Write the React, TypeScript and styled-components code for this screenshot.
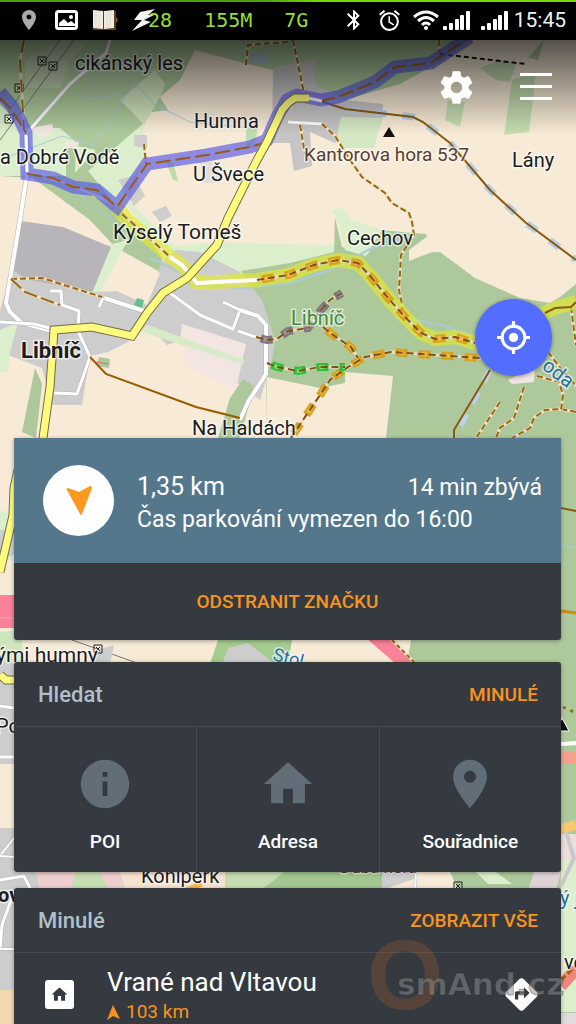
import React from 'react';
import styled, { createGlobalStyle } from 'styled-components';
import { MdAlarm, MdBluetooth, MdDirections, MdHome, MdInfo, MdPlace } from 'react-icons/md';

const GlobalStyle = createGlobalStyle`
  * { box-sizing: border-box; }
  body { margin: 0; background: #f7ead6; font-family: Roboto, sans-serif; }
  button { border: 0; padding: 0; background: none; font: inherit; color: inherit; cursor: pointer; }
  svg { display: block; flex: none; }
`;

const Screen = styled.div`
  position: relative;
  height: 100vh;
  overflow: hidden;
  display: flex;
  flex-direction: column;
`;

const MapSvg = styled.svg`
  position: absolute;
  inset: 0;
  width: 100%;
  height: 100%;
  text { font-family: Roboto, sans-serif; paint-order: stroke; stroke-linejoin: round; }
`;

const Overlay = styled.div`
  position: relative;
  display: flex;
  flex-direction: column;
  flex: 1;
`;

const StatusBar = styled.header`
  height: 40px;
  flex: none;
  display: flex;
  align-items: center;
  justify-content: space-between;
  padding: 0 10px 0 17px;
  background: linear-gradient(90deg, #48a010 45%, #72d800 55%) top / 100% 2px no-repeat #000;
  color: #fff;
`;

const StatusGroup = styled.div<{ $gap: number }>`
  display: flex;
  align-items: center;
  gap: ${(p) => p.$gap}px;
`;

const Monitor = styled.span<{ $shift?: boolean }>`
  font: 20px/24px 'DejaVu Sans Mono', monospace;
  color: #98df2e;
  margin-left: ${(p) => (p.$shift ? '-24px' : '18px')};
`;

const Clock = styled.time`
  font-size: 21px;
  line-height: 24px;
  color: #f2f2f2;
  margin-left: -5px;
`;

const Toolbar = styled.nav`
  display: flex;
  justify-content: flex-end;
  align-items: center;
  gap: 44px;
  height: 94px;
  flex: none;
  padding: 0 24px;
  background: linear-gradient(rgba(0, 0, 0, 0.66), rgba(0, 0, 0, 0));
  color: #fff;
`;

const IconButton = styled.button`
  display: flex;
`;

const LocateButton = styled.button`
  width: 77px;
  height: 77px;
  flex: none;
  align-self: flex-end;
  margin: 165px 24px 62px 0;
  border-radius: 50%;
  background: #536dfe;
  box-shadow: 0 1px 4px rgba(0, 0, 0, 0.4);
  display: flex;
  align-items: center;
  justify-content: center;
`;

const Dashboard = styled.main`
  display: flex;
  flex-direction: column;
  flex: 1;
  padding: 0 15px 0 14px;
`;

const Card = styled.section<{ $gap?: number; $square?: boolean }>`
  flex: none;
  margin-bottom: ${(p) => p.$gap ?? 0}px;
  background: #343a40;
  border-radius: ${(p) => (p.$square ? '0 0 3px 3px' : '3px')};
  box-shadow: 0 1px 4px rgba(0, 0, 0, 0.35);
  overflow: hidden;
`;

const ParkingInfo = styled.div`
  display: flex;
  align-items: center;
  gap: 23px;
  height: 125px;
  padding: 0 19px 0 29px;
  background: #54778c;
  color: #fff;
`;

const Compass = styled.div`
  width: 71px;
  height: 71px;
  flex: none;
  border-radius: 50%;
  background: #fff;
  display: flex;
  align-items: center;
  justify-content: center;
`;

const ParkingText = styled.div`
  flex: 1;
  padding-top: 6px;
`;

const ParkingRow = styled.div`
  display: flex;
  justify-content: space-between;
  align-items: baseline;
  font-size: 23px;
  line-height: 32px;
`;

const Distance = styled.strong`
  font-size: 25px;
  font-weight: 400;
`;

const RemoveButton = styled.button`
  display: block;
  width: 100%;
  height: 77px;
  color: #f7931e;
  font-size: 19px;
  font-weight: 500;
`;

const CardHeader = styled.header`
  display: flex;
  align-items: center;
  justify-content: space-between;
  height: 65px;
  padding: 0 23px 0 24px;
  border-bottom: 1px solid #444c53;
`;

const CardTitle = styled.h2`
  margin: 0;
  font-size: 22px;
  font-weight: 500;
  color: #b0c0ca;
`;

const TextButton = styled.button`
  color: #f7931e;
  font-size: 19px;
  font-weight: 500;
`;

const Tiles = styled.div`
  display: grid;
  grid-template-columns: repeat(3, 1fr);
  height: 145px;
`;

const Tile = styled.button`
  display: flex;
  flex-direction: column;
  align-items: center;
  padding-top: 28px;
  gap: 16px;
  font-size: 19px;
  line-height: 26px;
  font-weight: 500;
  color: #fff;
  & + & { border-left: 1px solid #444c53; }
  svg { color: #616e77; }
`;

const HistoryRow = styled.div`
  display: flex;
  align-items: center;
  height: 82px;
  padding: 0 20px 0 31px;
  color: #fff;
`;

const HomeBadge = styled.div`
  width: 29px;
  height: 29px;
  border-radius: 3px;
  background: #fff;
  color: #343a40;
  display: flex;
  align-items: center;
  justify-content: center;
`;

const PlaceText = styled.div`
  flex: 1;
  margin-left: 33px;
  padding-top: 4px;
`;

const PlaceName = styled.div`
  font-size: 26px;
  line-height: 32px;
`;

const PlaceDistance = styled.div`
  display: flex;
  align-items: center;
  gap: 6px;
  font-size: 19px;
  line-height: 28px;
  color: #f7931e;
`;

const Watermark = styled.svg`
  position: absolute;
  right: 0;
  bottom: 0;
  pointer-events: none;
`;

const FOREST = '#adc99c';
const MEADOW = '#dcefcc';
const TOWN = '#cdcdcd';
const PALE = '#f3e6e2';
const TRACK = '#996611';

type Pts = { d: string };

const RoadWhite = ({ d, w = 4 }: Pts & { w?: number }) => (
  <g fill="none" strokeLinejoin="round">
    <polyline points={d} stroke="#b5b5b5" strokeWidth={w + 1} />
    <polyline points={d} stroke="#fff" strokeWidth={w} />
  </g>
);

const RoadYellow = ({ d }: Pts) => (
  <g fill="none" strokeLinejoin="miter">
    <polyline points={d} stroke="#6f6f45" strokeWidth={9} />
    <polyline points={d} stroke="#fdfa7e" strokeWidth={7} />
  </g>
);

const Path = ({ d, dash = '6 3' }: Pts & { dash?: string }) => (
  <g fill="none">
    <polyline points={d} stroke="#efe2c4" strokeWidth={3} />
    <polyline points={d} stroke={TRACK} strokeWidth={2} strokeDasharray={dash} />
  </g>
);

const Chain = ({ d, color, inner }: Pts & { color: string; inner: string }) => (
  <g fill="none">
    <polyline points={d} stroke="#e9dcc0" strokeWidth={3} />
    <polyline points={d} stroke={color} strokeWidth={8} strokeDasharray="12 11" strokeDashoffset={-5} />
    <polyline points={d} stroke={inner} strokeWidth={4} strokeDasharray="5 18" strokeDashoffset={-8} />
    <polyline points={d} stroke="#7d5313" strokeWidth={2} strokeDasharray="7 4" />
  </g>
);

const Stream = ({ d, w = 1 }: Pts & { w?: number }) => (
  <polyline points={d} fill="none" stroke="#a9cbd8" strokeWidth={w} />
);

const Pylon = ({ x, y }: { x: number; y: number }) => (
  <path
    d={`M${x - 4} ${y - 4}h8v8h-8zM${x - 2} ${y - 2}l4 4m0 -4l-4 4`}
    fill="none"
    stroke="#222"
    strokeWidth={1}
  />
);

type LabelProps = { x: number; y: number; size?: number; color?: string; bold?: boolean; turn?: number; halo?: string; children: string };

const Label = ({ x, y, size = 20, color = '#1b1b20', bold, turn = 0, halo = 'rgba(255,255,255,.6)', children }: LabelProps) => (
  <text x={x} y={y} fontSize={size} fill={color} stroke={halo} strokeWidth={3} fontWeight={bold ? 700 : 400} transform={`rotate(${turn} ${x} ${y})`}>
    {children}
  </text>
);

const route = '0,92 12,106 20,120 26,133 27,174 53,178 73,187 97,190 117,207 147,164 207,155 250,147 267,140 277,117 287,100 297,95 321,100 338,97 375,82 395,67 431,63 470,37';
const trail = '117,207 127,220 157,245 170,257 182,265 197,283 257,280 288,275 314,265 338,260 358,263 371,277 388,298 405,317 421,333 435,339 455,337 475,343 500,346 545,313 555,308 576,302';

const MapView = () => (
  <MapSvg viewBox="0 0 576 1024" preserveAspectRatio="xMidYMin slice" aria-label="Mapa">
    <rect width="576" height="1024" fill="#f7ead6" />

    {/* woods and meadows in the north */}
    <polygon points="0,40 250,40 470,40 440,62 400,84 345,100 300,100 273,70 240,62 195,50 180,80 160,97 168,110 144,113 144,160 130,190 110,200 60,180 0,176" fill={FOREST} />
    <polygon points="62,40 90,40 70,62 61,88 24,88 26,60" fill="#bfcfae" />
    <polygon points="0,105 25,128 60,128 76,142 78,146 96,150 72,176 0,176" fill={MEADOW} />
    <polygon points="120,100 155,70 165,84 160,97 144,125 132,112" fill="#cfe2bd" />
    <polygon points="88,171 144,123 144,160 117,206" fill={MEADOW} />
    <polygon points="30,128 52,124 54,130 42,139" fill={PALE} />
    <polygon points="66,142 79,142 76,160 60,160" fill={PALE} />
    <polygon points="66,148 76,148 74,195 66,190" fill={FOREST} />
    <polygon points="134,135 147,135 147,148 134,146" fill={TOWN} />
    <polygon points="246,128 258,128 254,148 246,148" fill="#bfdcae" />
    <polygon points="166,162 173,162 178,181 173,180" fill="#bfd9a8" />
    <polygon points="250,54 262,52 270,58 266,64 250,63" fill="#a9bfc6" />
    <polygon points="480,68 500,60 516,64 510,82 496,80" fill="#c5dab0" />
    <polygon points="448,100 465,102 460,127 445,120" fill="#c5ddb0" />
    <polygon points="512,80 536,72 529,132 504,135" fill="#c5ddb0" />
    <polygon points="528,58 544,40 538,60" fill={FOREST} />

    {/* built-up land by the northern junction */}
    <polygon points="273,68 315,59 315,84 345,100 383,104 383,118 360,118 335,143 310,132 312,166 294,171 290,143 272,143" fill="#c6c4c4" />
    <polygon points="341,117 383,118 374,148 342,148 336,140" fill="#d3e8c3" />
    <polygon points="200,162 220,162 220,183 204,183" fill="#e1ded9" />
    <polygon points="332,210 344,208 352,222 338,222" fill={MEADOW} />

    {/* central forest belt */}
    <polygon points="30,176 66,184 117,207 164,247 160,272 115,247 90,220" fill={FOREST} />
    <polygon points="117,190 133,205 175,246 215,242 260,244 260,270 205,285 165,262" fill={MEADOW} />
    <polygon points="108,245 128,240 98,296 90,290" fill={MEADOW} />
    <polygon points="230,243 336,245 338,258 290,272 244,272" fill={MEADOW} />
    <polygon points="118,180 134,176 145,196 134,206" fill="#cfd0c4" />
    <polygon points="152,212 166,206 172,216 160,222" fill={TOWN} />
    <polygon points="241,271 290,263 334,252 335,218 342,247 368,254 380,230 426,234 428,238 410,253 440,252 475,278 520,298 550,303 560,297 576,284 576,1024 200,1024 230,438 267,438 266,340 262,312" fill={FOREST} />
    <polygon points="409,250 428,236 444,248 432,252 409,261" fill="#f7ead6" />
    <polygon points="338,222 350,220 382,230 366,256 345,250" fill={MEADOW} />
    <polygon points="267,377 320,388 345,383 345,372 393,376 386,438 267,438" fill="#f7ead6" />
    <polygon points="512,384 508,380 535,366 534,382" fill={PALE} />

    {/* Libníč */}
    <polygon points="21,221 63,227 111,247 92,293 12,281" fill="#b8b5ba" />
    <polygon points="0,310 12,270 30,280 92,292 150,290 162,262 176,250 200,252 240,272 262,300 275,340 272,360 266,380 260,400 230,378 212,350 182,324 180,341 167,345 147,325 132,340 108,352 90,356 82,405 52,405 42,368 0,352" fill={TOWN} />
    <polygon points="128,258 160,273 147,305 104,285" fill="#f7ead6" />
    <polygon points="0,330 18,322 10,352 8,372 0,372" fill={MEADOW} />
    <polygon points="182,324 246,344 236,390 185,365" fill={PALE} />
    <polygon points="148,325 245,360 243,365 142,332" fill="#d8eac8" />
    <polygon points="35,368 42,384 36,438 22,432" fill={FOREST} />
    <polygon points="243,379 254,386 240,438 218,438 230,398" fill={FOREST} />
    <polygon points="137,298 144,300 142,308 134,305" fill="#68bd8c" />
    <polygon points="99,357 110,359 109,368 97,366" fill={FOREST} />
    <path d="M96 362l12 2" stroke="#d96a74" fill="none" />

    {/* streams */}
    <Stream d="97,40 100,65 85,100 118,95 135,83 155,105 190,122 250,128" />
    <Stream d="135,83 110,120 92,145 62,136 0,160" />
    <Stream d="75,190 100,212 115,222" />
    <Stream d="150,258 180,272 190,285 244,288 288,284 330,270 350,260 370,249 400,240" w={2} />
    <Stream d="400,317 445,326 478,338" w={2} />

    {/* power lines */}
    <g fill="none" stroke="#777" strokeWidth="1">
      <path d="M60 40L8 112M74 40L0 140M72 640L140 664" />
    </g>
    <Pylon x={42} y={61} />
    <Pylon x={53} y={66} />
    <Pylon x={19} y={88} />
    <Pylon x={9} y={119} />

    {/* lanes */}
    <RoadWhite d="110,40 106,53 70,84 27,133" w={3} />
    <RoadWhite d="26,133 27,174 20,220 6,303 10,312 22,323 52,331" />
    <RoadWhite d="0,322 34,324 54,329" w={3} />
    <RoadWhite d="104,298 144,311" />
    <RoadWhite d="103,298 99,307" w={3} />
    <RoadWhite d="170,293 200,315 233,329 240,310 223,302" w={3} />
    <RoadWhite d="240,310 258,316 266,325 266,374 248,402 240,420" />
    <RoadWhite d="50,291 61,291 62,305 79,311 78,331 90,357 77,394 54,393" w={3} />
    <RoadWhite d="288,122 322,124" w={3} />

    {/* tracks */}
    <polyline points="320,101 345,109 413,117 423,122 450,143 490,190 525,222 576,260" fill="none" stroke="#b5d0e5" strokeWidth="7" strokeDasharray="12 16" />
    <polyline points="320,101 345,109 413,117 423,122 450,143 490,190 525,222 576,260" fill="none" stroke="#8a5a10" strokeWidth="2" />
    <polyline points="490,370 454,438" fill="none" stroke="#b9d3e6" strokeWidth="6" strokeDasharray="13 12" />
    <polyline points="490,370 454,430 454,438" fill="none" stroke="#8a5a10" strokeWidth="2" />
    <polyline points="90,357 106,374 196,407 240,418" fill="none" stroke="#965c00" strokeWidth="2" />
    <Path d="322,124 335,136 350,160 362,177 385,193 392,203 409,213 412,222 414,235 401,255 399,290 403,310" />
    <Path d="293,40 305,98" />
    <Path d="300,125 305,154" />
    <Path d="11,279 42,278 102,297" />
    <Path d="11,279 25,292 60,305" dash="14 4" />
    <Path d="24,40 20,60 24,130" dash="13 7" />
    <Path d="144,144 146,164" />
    <Path d="246,65 248,45 288,42" />
    <Path d="439,40 440,56" />
    <Path d="500,402 476,438" />
    <Path d="524,387 514,418 500,428 496,438" />
    <Path d="576,412 561,409 545,410 534,418 530,428 512,438" />
    <Path d="537,376 559,382 563,395 561,410" />
    <Path d="571,307 576,345" />
    <Path d="548,352 562,370 576,386" />
    <path d="M440 54L526 64" stroke="#111" strokeWidth="2" strokeDasharray="5 3" />

    {/* highlighted routes */}
    <polyline points={trail} fill="none" stroke="#e3ea2c" strokeOpacity=".65" strokeWidth="14" strokeLinejoin="round" />
    <polyline points="170,257 182,265 197,283 257,280" fill="none" stroke="#fff" strokeWidth="4" />
    <Path d="122,214 157,245 170,257" dash="7 4" />
    <Chain d="257,280 288,275 314,265 338,260 358,263 371,277 388,298 405,317 421,333 435,339 455,337 475,343" color="#dba01c" inner="#f0bd5c" />
    <polyline points="545,313 555,308 571,307 576,302" fill="none" stroke="#8a5a10" strokeWidth="2" />
    <Chain d="291,438 305,417 318,398 330,380 348,367 365,357 391,352 435,355 481,358" color="#dba01c" inner="#f0bd5c" />
    <Chain d="323,327 333,335 351,347 358,358" color="#dba01c" inner="#f0bd5c" />
    <RoadWhite d="238,331 256,337" w={3} />
    <Chain d="256,337 267,340 277,339 288,331 308,328 321,310 330,300 342,293" color="#7f7680" inner="#a59a96" />
    <Chain d="267,363 277,367 298,371 320,367 345,367" color="#2fbd3c" inner="#7fdc6c" />
    <polyline points={route} fill="none" stroke="#5656e6" strokeOpacity=".65" strokeWidth="13" />
    <polyline points="27,174 53,178 73,187 97,190 117,207 147,164 207,155 250,147 267,142" fill="none" stroke="#9a5c14" strokeWidth="2" strokeDasharray="15 5" />
    <polyline points="0,98 12,110 26,133" fill="none" stroke="#9a5c14" strokeWidth="2" strokeDasharray="15 5" />
    <polyline points="320,101 338,97 375,82 395,67 431,63 470,37" fill="none" stroke="#9a5c14" strokeWidth="2" strokeDasharray="15 5" />
    <polyline points="26,135 27,172" fill="none" stroke="#fff" strokeWidth="3" />
    <polyline points="308,98 322,101" fill="none" stroke="#eee" strokeWidth="3" />
    <RoadYellow d="36,460 43,438 50,387 54,330 92,327 132,336 147,313 163,293 187,278 217,245 228,218 257,160 267,142 282,110 288,103 295,98 309,98" />

    {/* strips visible between and beside the cards */}
    <polygon points="0,510 14,515 14,560 0,560" fill={MEADOW} />
    <polygon points="0,530 14,528 14,555 0,560" fill={TOWN} />
    <RoadYellow d="18,470 14,488 13,515 0,572" />
    <rect y="595" width="20" height="33" fill="#fb8198" />
    <path d="M0 618h20" stroke="#f3a8b2" />
    <polygon points="0,632 20,630 25,662 0,662" fill="#cfe6bd" />
    <polygon points="0,662 14,662 14,770 0,770" fill={TOWN} />
    <polygon points="96,650 114,645 110,664 92,664" fill={TOWN} />
    <polygon points="218,640 300,640 310,664 210,664" fill="#a5cc90" />
    <polygon points="228,648 248,643 275,664 222,664" fill={TOWN} />
    <polygon points="292,640 411,640 407,664 288,664" fill="#f7ead6" />
    <polygon points="366,638 388,638 416,664 396,664" fill="#fb8198" />
    <Path d="392,640 416,664" dash="4 3" />
    <RoadYellow d="0,675 6,680 20,680" />
    <RoadWhite d="0,706 14,708" w={3} />
    <RoadWhite d="0,757 14,757" w={3} />
    <rect y="764" width="14" height="64" fill="#f7ead6" />
    <rect y="828" width="14" height="162" fill={TOWN} />
    <RoadWhite d="0,856 14,838" w={2} />
    <RoadWhite d="0,856 14,857" w={2} />
    <polygon points="0,872 70,872 76,890 0,890" fill={TOWN} />
    <polygon points="36,872 120,872 126,890 40,890" fill="#efcfcd" />
    <polygon points="76,872 100,872 108,890 70,890" fill="#c5ddb0" />
    <polygon points="120,872 225,872 225,890 126,890" fill="#f7e2cf" />
    <polygon points="225,872 290,872 260,890 225,890" fill="#c5ddb0" />
    <polygon points="284,872 382,872 382,890 262,890" fill="#a2c78f" />
    <polygon points="382,872 414,872 414,880 382,890" fill={TOWN} />
    <polygon points="382,890 414,879 414,890" fill="#f7ead6" />
    <polygon points="414,872 450,872 458,890 414,890" fill="#f7ead6" />
    <polygon points="476,872 496,872 512,884 488,884" fill={MEADOW} />
    <polygon points="534,872 561,872 556,890 528,890" fill="#e0d3d6" />
    <RoadWhite d="416,872 415,890" w={2} />
    <RoadWhite d="0,880 24,876 31,890" w={3} />
    <RoadWhite d="14,892 2,925 0,950" w={3} />
    <RoadWhite d="0,949 14,949" w={2} />
    <rect y="990" width="14" height="34" fill="#f4d9b0" />
    <polyline points="186,890 202,884" stroke="#f6b83f" strokeWidth="5" fill="none" />
    <path d="M561 508L576 511" stroke="#8a5a10" strokeWidth="2" />
    <path d="M561 544L576 548" stroke="#a9cbd8" />
    <path d="M561 611L576 613" stroke="#c89010" strokeWidth="3" />
    <path d="M563 707L576 713" stroke={TRACK} strokeWidth="3" strokeDasharray="3 5" />
    <path d="M556 731l6-13 7 13z" fill="#111" stroke="#fff" />
    <path d="M561 744L576 743" stroke="#fff" strokeWidth="4" />
    <path d="M561 757L576 758" stroke="#f5a08a" strokeWidth="11" />
    <rect x="561" y="834" width="15" height="26" fill="#eadfdb" />
    <rect x="561" y="860" width="15" height="152" fill={MEADOW} />
    <path d="M561 829L576 825" stroke="#f8c873" strokeWidth="10" />
    <path d="M566 832L574 858L561 886" stroke="#cfc6cb" strokeWidth="4" fill="none" />
    <path d="M561 986L576 969" stroke="#f2867a" strokeWidth="12" />
    <path d="M561 980L576 966" stroke={TRACK} strokeWidth="3" strokeDasharray="6 3" />
    <rect x="561" y="1013" width="15" height="11" fill="#e1dcda" />
    <Pylon x={98} y={649} />
    <Pylon x={458} y={886} />

    <Label x={75} y={70}>cikánský les</Label>
    <Label x={194} y={128}>Humna</Label>
    <Label x={0} y={164}>a Dobré Vodě</Label>
    <Label x={193} y={181}>U Švece</Label>
    <Label x={304} y={161} color="#5d3d2c" size={19}>Kantorova hora 537</Label>
    <path d="M389 127l6 10h-12z" fill="#111" />
    <Label x={512} y={167}>Lány</Label>
    <Label x={113} y={239} size={21}>Kyselý Tomeš</Label>
    <Label x={347} y={245}>Cechov</Label>
    <Label x={291} y={325} color="#3c8a3f">Libníč</Label>
    <Label x={21} y={358} size={22} bold>Libníč</Label>
    <Label x={192} y={435}>Na Haldách</Label>
    <Label x={541} y={368} color="#2272a6" turn={38}>oda</Label>
    <Label x={-4} y={662} size={21}>ými humny</Label>
    <Label x={272} y={660} color="#2272a6" size={18} turn={14}>Stol</Label>
    <Label x={-4} y={733}>Po</Label>
    <Label x={141} y={883}>Koniperk</Label>
    <Label x={340} y={873} color="#5d3d2c" size={17}>Dubá hora</Label>
    <Label x={-2} y={902} bold>ov</Label>
    <Label x={560} y={905} color="#2272a6">ý j</Label>
    <Label x={564} y={969}>ve</Label>
  </MapSvg>
);

const Signal = () => (
  <svg width="27" height="19" viewBox="0 0 27 19" fill="#fff">
    <rect x="0" y="15" width="4" height="4" rx="1" />
    <rect x="6" y="12" width="4" height="7" rx="1" />
    <rect x="12" y="8" width="4" height="11" rx="1" />
    <rect x="17" y="4" width="4" height="15" rx="1" />
    <rect x="23" y="0" width="4" height="19" rx="1" />
  </svg>
);

const ImageIcon = () => (
  <svg width="23" height="20" viewBox="0 0 23 20">
    <rect x="1.5" y="1.5" width="20" height="17" rx="2" fill="none" stroke="#fff" strokeWidth="3" />
    <path d="M4 16v-3l5-4 4 4 3-2 4 3v2z" fill="#fff" />
    <circle cx="16" cy="7" r="2" fill="#fff" />
  </svg>
);

const BookIcon = () => (
  <svg width="26" height="22" viewBox="0 0 26 22">
    <path d="M1 2h23v19H1z" fill="#5c3b1c" />
    <path d="M1 1l10 1v18L1 19zM12 2l10-1v18l-10 1z" fill="#eeeae0" />
    <path d="M4 2v17M7 2v17M15 2v17M18 2v17" stroke="#dcd9ce" />
    <path d="M24 8l2 3-2 3z" fill="#8c5a24" />
  </svg>
);

const BoltIcon = () => (
  <svg width="26" height="24" viewBox="0 0 26 24" fill="#f3f3f3">
    <path d="M23 1L8 4 2 12h8L0 23l19-9-7-2 10-5h-6z" />
  </svg>
);

const WifiIcon = () => (
  <svg width="26" height="20" viewBox="0 0 26 20" fill="none" stroke="#fff" strokeWidth="3">
    <path d="M1 7Q13 -3 25 7M5 11Q13 4 21 11M9 15Q13 11 17 15" />
    <circle cx="13" cy="18" r="2" fill="#fff" stroke="none" />
  </svg>
);

const AlarmIcon = MdAlarm;

const GearIcon = () => (
  <svg width="39" height="39" viewBox="0 0 24 24" fill="#fff">
    <path d="M19.43 12.98c.04-.32.07-.64.07-.98s-.03-.66-.07-.98l2.11-1.65c.19-.15.24-.42.12-.64l-2-3.46c-.12-.22-.39-.3-.61-.22l-2.49 1c-.52-.4-1.08-.73-1.69-.98l-.38-2.65C14.46 2.18 14.25 2 14 2h-4c-.25 0-.46.18-.49.42l-.38 2.65c-.61.25-1.17.59-1.69.98l-2.49-1c-.23-.09-.49 0-.61.22l-2 3.46c-.13.22-.07.49.12.64l2.11 1.65c-.04.32-.07.65-.07.98s.03.66.07.98l-2.11 1.65c-.19.15-.24.42-.12.64l2 3.46c.12.22.39.3.61.22l2.49-1c.52.4 1.08.73 1.69.98l.38 2.65c.03.24.24.42.49.42h4c.25 0 .46-.18.49-.42l.38-2.65c.61-.25 1.17-.59 1.69-.98l2.49 1c.23.09.49 0 .61-.22l2-3.46c.12-.22.07-.49-.12-.64l-2.11-1.65zM12 15.5c-1.93 0-3.5-1.57-3.5-3.5s1.57-3.5 3.5-3.5 3.5 1.57 3.5 3.5-1.57 3.5-3.5 3.5z" />
  </svg>
);

const MenuIcon = () => (
  <svg width="32" height="28" viewBox="0 0 32 28" fill="#fff">
    <path d="M0 0h32v3H0zM0 12h32v3H0zM0 24h32v3H0z" />
  </svg>
);

const LocateIcon = () => (
  <svg width="33" height="33" viewBox="0 0 32 32" fill="none" stroke="#fff" strokeWidth="3">
    <circle cx="16" cy="16" r="11" />
    <path d="M16 0v5M16 27v5M0 16h5M27 16h5" />
    <circle cx="16" cy="16" r="4.5" fill="#fff" stroke="none" />
  </svg>
);

const HeadingArrow = () => (
  <svg width="26" height="30" viewBox="0 0 26 30" fill="#ff9820">
    <path d="M1 4Q0 2 2 2L13 6 24 0Q26 0 26 2L16 28Q15 30 14 28z" />
  </svg>
);

export default function App() {
  return (
    <Screen>
      <GlobalStyle />
      <MapView />
      <Overlay>
        <StatusBar>
          <StatusGroup $gap={14}>
            <MdPlace size={24} color="#aaa" />
            <ImageIcon />
            <BookIcon />
            <BoltIcon />
            <Monitor $shift>28</Monitor>
            <Monitor>155M</Monitor>
            <Monitor>7G</Monitor>
          </StatusGroup>
          <StatusGroup $gap={11}>
            <MdBluetooth size={24} />
            <AlarmIcon size={25} />
            <StatusGroup $gap={4}>
              <WifiIcon />
              <Signal />
            </StatusGroup>
            <Signal />
            <Clock>15:45</Clock>
          </StatusGroup>
        </StatusBar>
        <Toolbar>
          <IconButton aria-label="Nastavení"><GearIcon /></IconButton>
          <IconButton aria-label="Menu"><MenuIcon /></IconButton>
        </Toolbar>
        <LocateButton aria-label="Moje poloha"><LocateIcon /></LocateButton>
        <Dashboard>
          <Card $gap={22} $square>
            <ParkingInfo>
              <Compass><HeadingArrow /></Compass>
              <ParkingText>
                <ParkingRow>
                  <Distance>1,35 km</Distance>
                  <span>14 min zbývá</span>
                </ParkingRow>
                <ParkingRow>Čas parkování vymezen do 16:00</ParkingRow>
              </ParkingText>
            </ParkingInfo>
            <RemoveButton>ODSTRANIT ZNAČKU</RemoveButton>
          </Card>
          <Card $gap={16}>
            <CardHeader>
              <CardTitle>Hledat</CardTitle>
              <TextButton>MINULÉ</TextButton>
            </CardHeader>
            <Tiles>
              <Tile><MdInfo size={58} />POI</Tile>
              <Tile><MdHome size={58} />Adresa</Tile>
              <Tile><MdPlace size={58} />Souřadnice</Tile>
            </Tiles>
          </Card>
          <Card>
            <CardHeader>
              <CardTitle>Minulé</CardTitle>
              <TextButton>ZOBRAZIT VŠE</TextButton>
            </CardHeader>
            <HistoryRow>
              <HomeBadge><MdHome size={19} /></HomeBadge>
              <PlaceText>
                <PlaceName>Vrané nad Vltavou</PlaceName>
                <PlaceDistance>
                  <svg width="13" height="15" viewBox="0 0 13 15" fill="#f7931e">
                    <path d="M6 0L13 14 6 11 0 15z" />
                  </svg>
                  103 km
                </PlaceDistance>
              </PlaceText>
              <IconButton aria-label="Navigovat"><MdDirections size={39} /></IconButton>
            </HistoryRow>
          </Card>
        </Dashboard>
      </Overlay>
      <Watermark width="208" height="94" viewBox="0 0 208 94">
        <text x="-1" y="79" fontFamily="Liberation Sans, sans-serif" fontWeight="700" fontSize="98" fill="#b0622f" fillOpacity=".28">O</text>
        <text x="29" y="65" fontFamily="DejaVu Sans, sans-serif" fontWeight="700" fontSize="31" fill="#8d9093" fillOpacity=".5" stroke="#222" strokeOpacity=".35">smAnd.cz</text>
      </Watermark>
    </Screen>
  );
}
